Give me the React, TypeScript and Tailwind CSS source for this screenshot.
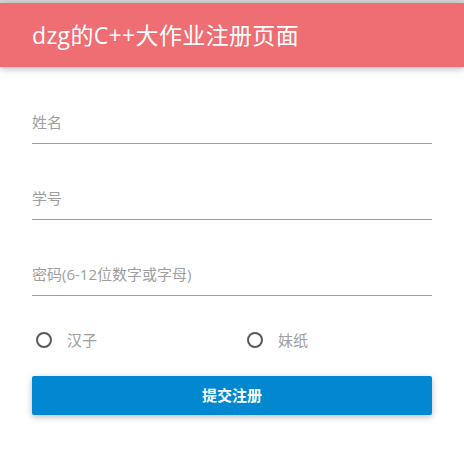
import React from "react";

const font = { fontFamily: '"Open Sans", "Noto Sans CJK SC", sans-serif' };

function Field({ label, h }: { label: string; h: string }) {
  return (
    <div className={`${h} border-b border-[#9e9e9e] flex items-end pb-[11px]`}>
      <span className="text-[15px] leading-[20px] text-[#9e9e9e]">{label}</span>
    </div>
  );
}

function Radio({ label, width }: { label: string; width: string }) {
  return (
    <label className={`flex items-center ${width}`}>
      <span className="ml-[4px] w-[16px] h-[16px] rounded-full border-2 border-[#5a5a5a] box-border" />
      <span className="ml-[15px] text-[15px] leading-[20px] text-[#9e9e9e]">{label}</span>
    </label>
  );
}

export default function App() {
  return (
    <div className="w-[464px] h-[467px] bg-white overflow-hidden" style={font}>
      <div className="h-[3px] bg-[#d4d4d4]" />
      <div className="h-[64px] bg-[#ee6e73] shadow-[0_2px_5px_0_rgba(0,0,0,0.16),0_2px_10px_0_rgba(0,0,0,0.12)] flex items-center px-[32px] relative z-10">
        <span className="text-white text-[23px] leading-[30px] tracking-[0.35px]">dzg的C++大作业注册页面</span>
      </div>
      <div className="px-[32px]">
        <Field label="姓名" h="h-[77px]" />
        <Field label="学号" h="h-[76px]" />
        <Field label="密码(6-12位数字或字母)" h="h-[76px]" />
        <div className="flex items-center mt-[34px] h-[20px]">
          <Radio label="汉子" width="w-[211px]" />
          <Radio label="妹纸" width="" />
        </div>
        <button className="mt-[26px] w-full h-[39px] rounded-[2px] bg-[#0288d1] text-white text-[15px] font-bold shadow-[0_2px_5px_0_rgba(0,0,0,0.16),0_2px_10px_0_rgba(0,0,0,0.12)]">
          提交注册
        </button>
      </div>
    </div>
  );
}
